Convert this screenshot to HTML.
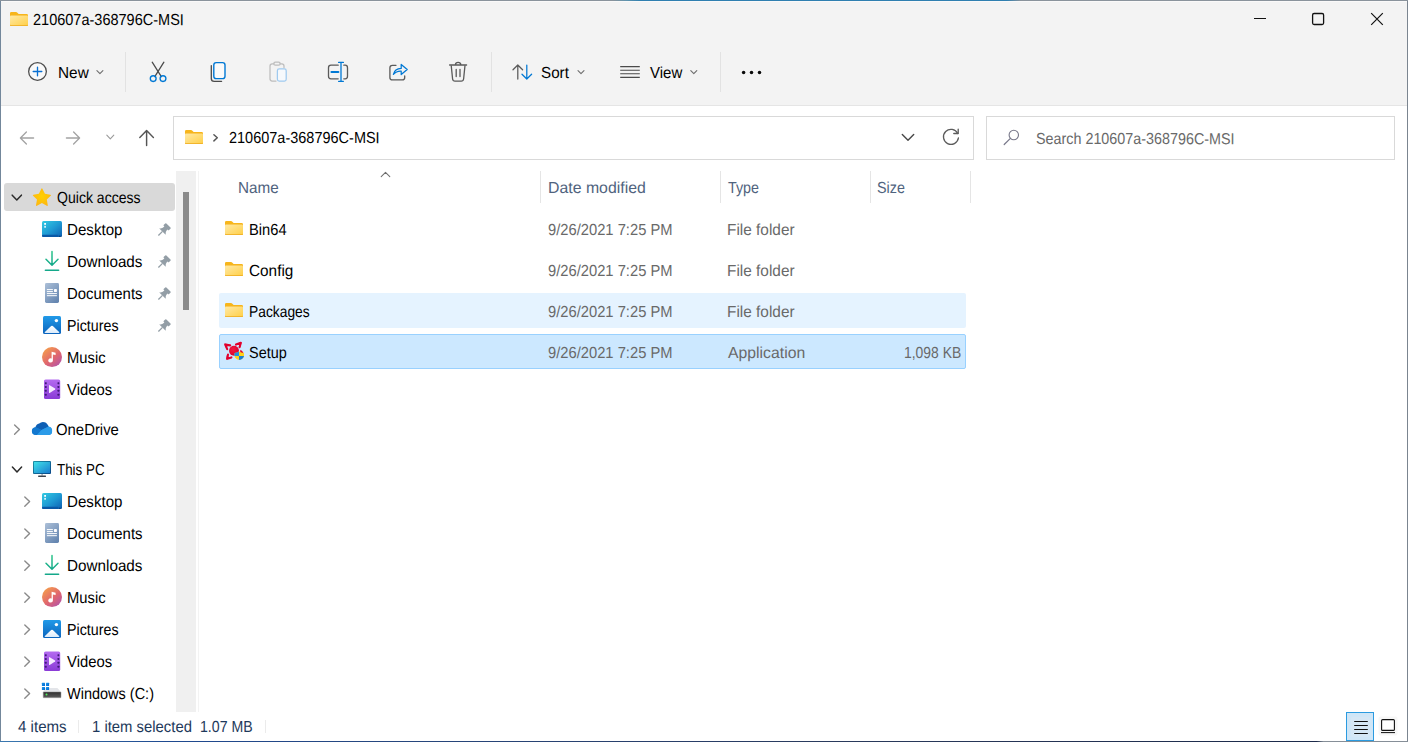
<!DOCTYPE html>
<html lang="en">
<head>
<meta charset="utf-8">
<title>210607a-368796C-MSI</title>
<style>
*{box-sizing:border-box;margin:0;padding:0}
html,body{width:1408px;height:742px;overflow:hidden;background:#fff}
body{position:relative;font-family:"Liberation Sans",sans-serif;font-size:16px;color:#000}
.t{position:absolute;white-space:nowrap;line-height:20px;height:20px;transform-origin:0 50%}
.k{color:#000}.g{color:#696969}.h{color:#50637e}.s{color:#1e395b}
.d{position:absolute}
.frame{position:absolute;left:0;top:0;width:1408px;height:742px;border:1px solid #7b8590;border-left-color:#73879b;border-top-color:#7d8a98;z-index:9}
.ft{left:0;top:0;width:1408px;height:1px;z-index:10;background:linear-gradient(90deg,#8a939c 0,#8a939c 43.5%,#5f93ad 44.5%,#2f7fb0 45.5%,#2f7fb0 71.5%,#8a939c 72.5%,#8a939c 100%)}
.hl{left:1px;top:1px;width:1406px;height:1px;background:#faf9f9}
.fb{left:0;top:741px;width:1408px;height:1px;z-index:10;background:linear-gradient(90deg,#3a78b0 0,#1f4a90 12%,#27467c 30%,#2a3a5c 60%,#1c2a4a 93.5%,#868f98 94%,#868f98 100%)}
.chrome{left:1px;top:1px;width:1406px;height:104px;background:#f3f3f3}
.cline{left:1px;top:105px;width:1406px;height:1px;background:#e5e5e5}
.vsep{width:1px;background:#e2e2e2;top:52px;height:40px}
.box{top:116px;height:44px;border:1px solid #d9d9d9;background:#fff}
.track{left:176px;top:171px;width:20px;height:541px;background:#f0f0f0}
.thumb{left:183px;top:192px;width:6px;height:118px;background:#8b8b8b}
.split{left:198px;top:171px;width:1px;height:541px;background:#f3f3f3}
.qa{left:4px;top:183px;width:171px;height:28px;background:#d9d9d9;border-radius:3px}
.hsep{top:171px;width:1px;height:32px;background:#e5e5e5}
.rowhov{left:219px;top:293px;width:747px;height:35px;background:#e5f3ff;border-radius:2px}
.rowsel{left:219px;top:334px;width:747px;height:35px;background:#cce8ff;border:1px solid #99d1ff;border-radius:2px}
.ssep{top:720px;width:1px;height:13px;background:#ebebeb}
svg.ic{position:absolute;overflow:visible}
</style>
</head>
<body>
<div class="d chrome"></div>
<div class="d cline"></div>
<div class="d vsep" style="left:125px"></div>
<div class="d vsep" style="left:491px"></div>
<div class="d vsep" style="left:720px"></div>
<div class="d box" style="left:173px;width:801px"></div>
<div class="d box" style="left:986px;width:409px"></div>
<div class="d qa"></div>
<div class="d track"></div>
<div class="d thumb"></div>
<div class="d split"></div>
<div class="d hsep" style="left:540px"></div>
<div class="d hsep" style="left:720px"></div>
<div class="d hsep" style="left:870px"></div>
<div class="d hsep" style="left:970px"></div>
<div class="d rowhov"></div>
<div class="d rowsel"></div>
<div class="d ssep" style="left:78px"></div>
<div class="d ssep" style="left:265px"></div>
<div class="d fb"></div>
<div class="d ft"></div>
<div class="d hl"></div>
<svg class="ic" width="1408" height="742" viewBox="0 0 1408 742" style="left:0;top:0"><defs><linearGradient id="fg" x1="0" y1="0" x2="1" y2="1"><stop offset="0" stop-color="#ffe9a6"/><stop offset="1" stop-color="#ffd04a"/></linearGradient><radialGradient id="sg" cx=".5" cy=".45" r=".6"><stop offset="0" stop-color="#ffd000"/><stop offset="1" stop-color="#fdb515"/></radialGradient><linearGradient id="dg" x1="0" y1="0" x2="1" y2="1"><stop offset="0" stop-color="#33cbe2"/><stop offset=".5" stop-color="#1f9bd4"/><stop offset="1" stop-color="#0d5fb2"/></linearGradient><linearGradient id="gg" x1="0" y1="0" x2="0" y2="1"><stop offset="0" stop-color="#2bc48a"/><stop offset="1" stop-color="#14a88a"/></linearGradient><linearGradient id="cg" x1="0" y1="0" x2=".7" y2="1"><stop offset="0" stop-color="#adc0d8"/><stop offset="1" stop-color="#6687b1"/></linearGradient><linearGradient id="pg" x1="0" y1="0" x2="0" y2="1"><stop offset="0" stop-color="#219ae8"/><stop offset="1" stop-color="#0c64bd"/></linearGradient><linearGradient id="mg" x1="0.15" y1="0.1" x2=".85" y2=".95"><stop offset="0" stop-color="#f39a4e"/><stop offset=".55" stop-color="#e0666e"/><stop offset="1" stop-color="#b455a8"/></linearGradient><linearGradient id="vg" x1="0" y1="0" x2="0" y2="1"><stop offset="0" stop-color="#b46bf0"/><stop offset="1" stop-color="#8a3bd6"/></linearGradient><linearGradient id="tg" x1="0" y1="0" x2="1" y2="1"><stop offset="0" stop-color="#40e0e8"/><stop offset="1" stop-color="#1a7ed0"/></linearGradient><linearGradient id="wg" x1="0" y1="0" x2="0" y2="1"><stop offset="0" stop-color="#fff"/><stop offset="1" stop-color="#dcecfb"/></linearGradient><linearGradient id="tf" x1="0" y1="0" x2="1" y2="1"><stop offset="0" stop-color="#1c93a8"/><stop offset="1" stop-color="#0a4688"/></linearGradient><linearGradient id="hg" x1="0" y1="0" x2="0" y2="1"><stop offset="0" stop-color="#2e2e2e"/><stop offset="1" stop-color="#5c5c5c"/></linearGradient><linearGradient id="lg" x1="0" y1="0" x2="1" y2="1"><stop offset="0" stop-color="#1a96ea"/><stop offset="1" stop-color="#0068d2"/></linearGradient><radialGradient id="rg" cx=".4" cy=".35" r=".7"><stop offset="0" stop-color="#f2183f"/><stop offset="1" stop-color="#d9002c"/></radialGradient></defs>
<g transform="translate(10,12)"><path d="M0 1.3Q0 0 1.3 0H6.1Q6.7 0 7.1 .4L8.6 1.9H16.7Q18 1.9 18 3.2V12.7Q18 14 16.7 14H1.3Q0 14 0 12.7Z" fill="#f7b51b"/><path d="M0 4.4Q0 3.5 .9 3.5H17.1Q18 3.5 18 4.4V12.8Q18 14 16.8 14H1.2Q0 14 0 12.8Z" fill="#eeaa1c"/><path d="M0 4.4Q0 3.5 .9 3.5H17.1Q18 3.5 18 4.4V12.3Q18 13.3 17 13.3H1Q0 13.3 0 12.3Z" fill="url(#fg)"/></g>
<rect x="1254" y="18" width="12" height="1" fill="#111"/>
<rect x="1312.6" y="13.5" width="11" height="11" rx="1.5" fill="none" stroke="#111" stroke-width="1.3"/>
<path d="M1371.2 13.2L1382.8 24.8M1382.8 13.2L1371.2 24.8" stroke="#111" stroke-width="1.2" fill="none"/>
<circle cx="37.5" cy="71.45" r="8.85" fill="#f9f9f9" stroke="#4d4d4d" stroke-width="1.3"/>
<path d="M33.2 71.5H41.8M37.5 67.2V75.8" stroke="#0a70d2" stroke-width="1.35" stroke-linecap="round"/>
<path d="M96.9 70.55L99.9 73.64999999999999L102.9 70.55" fill="none" stroke="#6e6e6e" stroke-width="1.1" stroke-linecap="round" stroke-linejoin="round"/>
<path d="M152.2 62.2L161.3 76.6M163.9 62.2L154.8 76.6" stroke="#4a4a4a" stroke-width="1.25" stroke-linecap="round"/>
<circle cx="153.2" cy="78.6" r="2.9" fill="none" stroke="#0078d4" stroke-width="1.35"/><circle cx="163" cy="78.6" r="2.9" fill="none" stroke="#0078d4" stroke-width="1.35"/>
<path d="M211.3 65.6V78.4Q211.3 81.3 214.2 81.3H221.6" fill="none" stroke="#4a4a4a" stroke-width="1.3" stroke-linecap="round"/>
<rect x="213.8" y="62.6" width="11.2" height="16" rx="2.4" fill="#fafafa" stroke="#0078d4" stroke-width="1.4"/>
<path d="M276 81H272.2Q270 81 270 78.8V66Q270 63.8 272.2 63.8H274M280 63.8H281.8Q284 63.8 284 66V67.6" fill="none" stroke="#bdbdbd" stroke-width="1.25" stroke-linecap="round"/>
<rect x="273.8" y="62.2" width="6.4" height="3" rx="1.5" fill="none" stroke="#bdbdbd" stroke-width="1.2"/>
<rect x="277.4" y="68.9" width="8.8" height="12.2" rx="1.8" fill="#f6f9fc" stroke="#9fcaef" stroke-width="1.25"/>
<path d="M338.2 65.2H331Q328.5 65.2 328.5 67.7V76.3Q328.5 78.8 331 78.8H338.2M343.8 65.2H345.2Q347.5 65.2 347.5 67.7V76.3Q347.5 78.8 345.2 78.8H343.8" fill="none" stroke="#5a5a5a" stroke-width="1.3" stroke-linecap="round"/>
<path d="M331.4 72H338.4" stroke="#0078d4" stroke-width="1.9" stroke-linecap="round"/>
<path d="M341 62.4V81.3M338.6 62.4H343.4M338.6 81.3H343.4" stroke="#0078d4" stroke-width="1.3" stroke-linecap="round"/>
<path d="M396 65.3H392.4Q389.9 65.3 389.9 67.8V77.4Q389.9 79.9 392.4 79.9H402.2Q404.7 79.9 404.7 77.4V76" fill="none" stroke="#5a5a5a" stroke-width="1.3" stroke-linecap="round"/>
<path d="M393.4 74.4Q394.6 68.6 401.2 68.4V64.4L407.2 69.5L401.2 74.6V71.1Q396.4 70.8 393.4 74.4Z" fill="#f3f3f3" stroke="#0078d4" stroke-width="1.25" stroke-linejoin="round"/>
<path d="M449.6 65H466.6M455.4 64.6Q455.6 62.4 458.1 62.4Q460.6 62.4 460.8 64.6" fill="none" stroke="#5a5a5a" stroke-width="1.3" stroke-linecap="round"/>
<path d="M451.2 65.4L452.6 79Q452.9 81.2 455 81.2H461.2Q463.3 81.2 463.6 79L465 65.4" fill="none" stroke="#5a5a5a" stroke-width="1.3" stroke-linejoin="round"/>
<path d="M456.2 69.4V76.6M460 69.4V76.6" stroke="#5a5a5a" stroke-width="1.3" stroke-linecap="round"/>
<path d="M517.8 65.2V79M513 69.8L517.8 65L522.6 69.8" fill="none" stroke="#5a5a5a" stroke-width="1.25" stroke-linecap="round" stroke-linejoin="round"/>
<path d="M526.8 65V78.8M522 74.2L526.8 79L531.6 74.2" fill="none" stroke="#0078d4" stroke-width="1.25" stroke-linecap="round" stroke-linejoin="round"/>
<path d="M578.0 70.55L581.0 73.64999999999999L584.0 70.55" fill="none" stroke="#6e6e6e" stroke-width="1.1" stroke-linecap="round" stroke-linejoin="round"/>
<path d="M620.2 66.6H639.8M620.2 70.2H639.8M620.2 73.8H639.8M620.2 77.4H639.8" stroke="#4a4a4a" stroke-width="1.1"/>
<path d="M690.8 70.55L693.8 73.64999999999999L696.8 70.55" fill="none" stroke="#6e6e6e" stroke-width="1.1" stroke-linecap="round" stroke-linejoin="round"/>
<circle cx="743.6" cy="72.5" r="1.75" fill="#0a0a0a"/>
<circle cx="751.5" cy="72.5" r="1.75" fill="#0a0a0a"/>
<circle cx="759.5" cy="72.5" r="1.75" fill="#0a0a0a"/>
<path d="M33.6 138H20.6M26.4 132L20.4 138L26.4 144" fill="none" stroke="#a3a3a3" stroke-width="1.3" stroke-linecap="round" stroke-linejoin="round"/>
<path d="M66.4 138H79.4M73.6 132L79.6 138L73.6 144" fill="none" stroke="#a3a3a3" stroke-width="1.3" stroke-linecap="round" stroke-linejoin="round"/>
<path d="M106.8 135.2L110.3 138.8L113.8 135.2" fill="none" stroke="#9a9a9a" stroke-width="1.1" stroke-linecap="round" stroke-linejoin="round"/>
<path d="M146.6 145.4V130.8M139.8 137.4L146.6 130.6L153.4 137.4" fill="none" stroke="#555" stroke-width="1.45" stroke-linecap="round" stroke-linejoin="round"/>
<g transform="translate(185,130)"><path d="M0 1.3Q0 0 1.3 0H6.1Q6.7 0 7.1 .4L8.6 1.9H16.7Q18 1.9 18 3.2V12.7Q18 14 16.7 14H1.3Q0 14 0 12.7Z" fill="#f7b51b"/><path d="M0 4.4Q0 3.5 .9 3.5H17.1Q18 3.5 18 4.4V12.8Q18 14 16.8 14H1.2Q0 14 0 12.8Z" fill="#eeaa1c"/><path d="M0 4.4Q0 3.5 .9 3.5H17.1Q18 3.5 18 4.4V12.3Q18 13.3 17 13.3H1Q0 13.3 0 12.3Z" fill="url(#fg)"/></g>
<path d="M213.9 134.7L217.3 137.8L213.9 140.9" fill="none" stroke="#555" stroke-width="1.45" stroke-linecap="round" stroke-linejoin="round"/>
<path d="M902.3 134.4L908.0 140.20000000000002L913.6999999999999 134.4" fill="none" stroke="#484848" stroke-width="1.4" stroke-linecap="round" stroke-linejoin="round"/>
<path d="M958.4 138A7.5 7.5 0 1 1 957.7 133.5" fill="none" stroke="#5c5c5c" stroke-width="1.35" stroke-linecap="round"/>
<path d="M958.2 129.2V133.5H953.8" fill="none" stroke="#5c5c5c" stroke-width="1.35" stroke-linecap="round" stroke-linejoin="round"/>
<circle cx="1013.8" cy="135" r="4.7" fill="none" stroke="#78788a" stroke-width="1.1"/><path d="M1010.4 138.4L1004.2 144.5" stroke="#78788a" stroke-width="1.2" stroke-linecap="round"/>
<path d="M12.2 195.15L16.799999999999997 200.04999999999998L21.4 195.15" fill="none" stroke="#2b2b2b" stroke-width="1.5" stroke-linecap="round" stroke-linejoin="round"/>
<g transform="translate(31.76,187.96) scale(1.045)"><path d="M9.1 .9Q9.7 -.2 10.3 .9L12.6 5.6L17.8 6.4Q19 6.6 18.1 7.5L14.4 11.1L15.3 16.3Q15.5 17.5 14.4 17L9.7 14.5L5 17Q3.9 17.5 4.1 16.3L5 11.1L1.3 7.5Q.4 6.6 1.6 6.4L6.8 5.6Z" fill="url(#sg)"/></g>
<g transform="translate(42,221)"><path d="M0 1.5Q0 0 1.5 0H18.5Q20 0 20 1.5V14.6Q20 16 18.5 16H1.5Q0 16 0 14.6Z" fill="url(#dg)"/><rect x="0" y="13.8" width="16.4" height="2.2" rx="1" fill="#0a58a6"/><rect x="2.2" y="2" width="1.8" height="1.8" fill="#fff"/><rect x="2.2" y="4.9" width="1.8" height="1.8" fill="#d7f3fb"/><rect x="16.9" y="14.6" width="1" height="1.4" fill="#0a3f7a"/><rect x="18.4" y="14.6" width="1" height="1.4" fill="#0a3f7a"/></g>
<g transform="translate(162.35,231.55)"><g transform="rotate(45)" fill="#939ea6"><path d="M-4.7 0Q-2.3 -1.3 -2.1 -4.6L-2.1 -5L-3 -5Q-3.7 -5 -3.7 -5.8L-3.7 -7.8Q-3.7 -8.6 -2.9 -8.6L2.9 -8.6Q3.7 -8.6 3.7 -7.8L3.7 -5.8Q3.7 -5 3 -5L2.1 -5L2.1 -4.6Q2.3 -1.3 4.7 0Z"/><rect x="-.65" y="-.2" width="1.3" height="5.8"/></g></g>
<g transform="translate(45,251.6)"><path d="M7 0V13.2M1 7.6L7 13.6L13 7.6" fill="none" stroke="url(#gg)" stroke-width="1.5" stroke-linecap="round" stroke-linejoin="round"/><path d="M0.4 18.7H13.6" stroke="#14a88a" stroke-width="1.6" stroke-linecap="round"/></g>
<g transform="translate(162.35,263.55)"><g transform="rotate(45)" fill="#939ea6"><path d="M-4.7 0Q-2.3 -1.3 -2.1 -4.6L-2.1 -5L-3 -5Q-3.7 -5 -3.7 -5.8L-3.7 -7.8Q-3.7 -8.6 -2.9 -8.6L2.9 -8.6Q3.7 -8.6 3.7 -7.8L3.7 -5.8Q3.7 -5 3 -5L2.1 -5L2.1 -4.6Q2.3 -1.3 4.7 0Z"/><rect x="-.65" y="-.2" width="1.3" height="5.8"/></g></g>
<g transform="translate(45,283.1)"><path d="M0 1.4Q0 0 1.4 0H12.6Q14 0 14 1.4V18.4Q14 19.8 12.6 19.8H1.4Q0 19.8 0 18.4Z" fill="url(#cg)"/><path d="M1.9 6.5H7.9M1.9 8.5H7.9M1.9 10.5H11.9M1.9 12.6H11.9" stroke="#fff" stroke-width="1"/><rect x="9" y="6" width="2.9" height="2.8" rx=".4" fill="#fff"/></g>
<g transform="translate(162.35,295.55)"><g transform="rotate(45)" fill="#939ea6"><path d="M-4.7 0Q-2.3 -1.3 -2.1 -4.6L-2.1 -5L-3 -5Q-3.7 -5 -3.7 -5.8L-3.7 -7.8Q-3.7 -8.6 -2.9 -8.6L2.9 -8.6Q3.7 -8.6 3.7 -7.8L3.7 -5.8Q3.7 -5 3 -5L2.1 -5L2.1 -4.6Q2.3 -1.3 4.7 0Z"/><rect x="-.65" y="-.2" width="1.3" height="5.8"/></g></g>
<g transform="translate(43,316.1)"><path d="M0 1.5Q0 0 1.5 0H16.5Q18 0 18 1.5V16.3Q18 17.8 16.5 17.8H1.5Q0 17.8 0 16.3Z" fill="url(#pg)"/><path d="M1.6 16.2L8.2 10Q9 9.3 9.8 10L16.4 16.2Q16.4 16.8 15.7 16.8H2.3Q1.6 16.8 1.6 16.2Z" fill="url(#wg)"/><circle cx="13.4" cy="4.5" r="1.7" fill="#fff"/></g>
<g transform="translate(162.35,327.55)"><g transform="rotate(45)" fill="#939ea6"><path d="M-4.7 0Q-2.3 -1.3 -2.1 -4.6L-2.1 -5L-3 -5Q-3.7 -5 -3.7 -5.8L-3.7 -7.8Q-3.7 -8.6 -2.9 -8.6L2.9 -8.6Q3.7 -8.6 3.7 -7.8L3.7 -5.8Q3.7 -5 3 -5L2.1 -5L2.1 -4.6Q2.3 -1.3 4.7 0Z"/><rect x="-.65" y="-.2" width="1.3" height="5.8"/></g></g>
<g transform="translate(42,347.1)"><circle cx="10" cy="10" r="10" fill="url(#mg)"/><path d="M9.6 4.6L13.6 5.6V8L10.9 7.4V13.4A2.3 2.1 0 1 1 9.6 11.5Z" fill="#fff"/></g>
<g transform="translate(44,379.4)"><path d="M0 1.6Q0 0 1.6 0H14.6Q16.2 0 16.2 1.6V18.1Q16.2 19.7 14.6 19.7H1.6Q0 19.7 0 18.1Z" fill="url(#vg)"/><path d="M5.7 5.8L11.1 9.2Q11.7 9.65 11.1 10.1L5.7 13.5Q5 13.8 5 13V6.3Q5 5.5 5.7 5.8Z" fill="#f6ecff"/><rect x="0.9" y="2.85" width="1.8" height="1.9" rx=".4" fill="#3f1a78"/><rect x="0.9" y="6.65" width="1.8" height="1.9" rx=".4" fill="#3f1a78"/><rect x="0.9" y="10.35" width="1.8" height="1.9" rx=".4" fill="#3f1a78"/><rect x="0.9" y="14.35" width="1.8" height="1.9" rx=".4" fill="#3f1a78"/><rect x="13.5" y="2.85" width="1.8" height="1.9" rx=".4" fill="#3f1a78"/><rect x="13.5" y="6.65" width="1.8" height="1.9" rx=".4" fill="#3f1a78"/><rect x="13.5" y="10.35" width="1.8" height="1.9" rx=".4" fill="#3f1a78"/><rect x="13.5" y="14.35" width="1.8" height="1.9" rx=".4" fill="#3f1a78"/></g>
<path d="M14.6 425.0L19.4 429.6L14.6 434.20000000000005" fill="none" stroke="#8a8a8a" stroke-width="1.4" stroke-linecap="round" stroke-linejoin="round"/>
<g transform="translate(31.9,421.8)"><path d="M7.6 3.6A5.6 5.6 0 0 1 17 5.2A4.3 4.3 0 0 1 20.2 9.4Q20.2 13.2 16.4 13.2H4.3Q0 13.2 0 9.3Q0 5.9 3.4 5.5Q5 3 7.6 3.6Z" fill="#1a86da"/><path d="M7.3 1.6A5.8 5.8 0 0 1 16.6 4.6L9.6 8.2L3.6 5.4A4.8 4.8 0 0 1 7.3 1.6Z" fill="#0e5fb4"/><path d="M3.6 5.4L9.6 8.2L5 13.2H4.3Q0 13.2 0 9.3Q0 6 3.6 5.4Z" fill="#1378cf"/><path d="M16.6 4.6A4.3 4.3 0 0 1 20.2 9.4Q20.2 13.2 16.4 13.2H5L9.6 8.2Z" fill="#2b9be8"/></g>
<path d="M12.4 467.05L17.0 471.95L21.6 467.05" fill="none" stroke="#2b2b2b" stroke-width="1.5" stroke-linecap="round" stroke-linejoin="round"/>
<g transform="translate(33,460.9)"><rect x="0" y="0" width="18" height="13.1" rx=".9" fill="url(#tf)"/><rect x="1" y="1" width="16" height="11.1" rx=".3" fill="url(#tg)"/><rect x="8.3" y="13.1" width="1.6" height="1.6" fill="#a9b0b8"/><rect x="5.1" y="14.7" width="7.9" height="1.4" rx=".4" fill="#3c424c"/></g>
<path d="M24.8 497.0L29.6 501.6L24.8 506.20000000000005" fill="none" stroke="#8a8a8a" stroke-width="1.4" stroke-linecap="round" stroke-linejoin="round"/>
<g transform="translate(42,493)"><path d="M0 1.5Q0 0 1.5 0H18.5Q20 0 20 1.5V14.6Q20 16 18.5 16H1.5Q0 16 0 14.6Z" fill="url(#dg)"/><rect x="0" y="13.8" width="16.4" height="2.2" rx="1" fill="#0a58a6"/><rect x="2.2" y="2" width="1.8" height="1.8" fill="#fff"/><rect x="2.2" y="4.9" width="1.8" height="1.8" fill="#d7f3fb"/><rect x="16.9" y="14.6" width="1" height="1.4" fill="#0a3f7a"/><rect x="18.4" y="14.6" width="1" height="1.4" fill="#0a3f7a"/></g>
<path d="M24.8 529.0L29.6 533.6L24.8 538.2" fill="none" stroke="#8a8a8a" stroke-width="1.4" stroke-linecap="round" stroke-linejoin="round"/>
<g transform="translate(45,523.1)"><path d="M0 1.4Q0 0 1.4 0H12.6Q14 0 14 1.4V18.4Q14 19.8 12.6 19.8H1.4Q0 19.8 0 18.4Z" fill="url(#cg)"/><path d="M1.9 6.5H7.9M1.9 8.5H7.9M1.9 10.5H11.9M1.9 12.6H11.9" stroke="#fff" stroke-width="1"/><rect x="9" y="6" width="2.9" height="2.8" rx=".4" fill="#fff"/></g>
<path d="M24.8 561.0L29.6 565.6L24.8 570.2" fill="none" stroke="#8a8a8a" stroke-width="1.4" stroke-linecap="round" stroke-linejoin="round"/>
<g transform="translate(45,555.6)"><path d="M7 0V13.2M1 7.6L7 13.6L13 7.6" fill="none" stroke="url(#gg)" stroke-width="1.5" stroke-linecap="round" stroke-linejoin="round"/><path d="M0.4 18.7H13.6" stroke="#14a88a" stroke-width="1.6" stroke-linecap="round"/></g>
<path d="M24.8 593.0L29.6 597.6L24.8 602.2" fill="none" stroke="#8a8a8a" stroke-width="1.4" stroke-linecap="round" stroke-linejoin="round"/>
<g transform="translate(42,587.1)"><circle cx="10" cy="10" r="10" fill="url(#mg)"/><path d="M9.6 4.6L13.6 5.6V8L10.9 7.4V13.4A2.3 2.1 0 1 1 9.6 11.5Z" fill="#fff"/></g>
<path d="M24.8 625.0L29.6 629.6L24.8 634.2" fill="none" stroke="#8a8a8a" stroke-width="1.4" stroke-linecap="round" stroke-linejoin="round"/>
<g transform="translate(43,620.1)"><path d="M0 1.5Q0 0 1.5 0H16.5Q18 0 18 1.5V16.3Q18 17.8 16.5 17.8H1.5Q0 17.8 0 16.3Z" fill="url(#pg)"/><path d="M1.6 16.2L8.2 10Q9 9.3 9.8 10L16.4 16.2Q16.4 16.8 15.7 16.8H2.3Q1.6 16.8 1.6 16.2Z" fill="url(#wg)"/><circle cx="13.4" cy="4.5" r="1.7" fill="#fff"/></g>
<path d="M24.8 657.0L29.6 661.6L24.8 666.2" fill="none" stroke="#8a8a8a" stroke-width="1.4" stroke-linecap="round" stroke-linejoin="round"/>
<g transform="translate(44,651.4)"><path d="M0 1.6Q0 0 1.6 0H14.6Q16.2 0 16.2 1.6V18.1Q16.2 19.7 14.6 19.7H1.6Q0 19.7 0 18.1Z" fill="url(#vg)"/><path d="M5.7 5.8L11.1 9.2Q11.7 9.65 11.1 10.1L5.7 13.5Q5 13.8 5 13V6.3Q5 5.5 5.7 5.8Z" fill="#f6ecff"/><rect x="0.9" y="2.85" width="1.8" height="1.9" rx=".4" fill="#3f1a78"/><rect x="0.9" y="6.65" width="1.8" height="1.9" rx=".4" fill="#3f1a78"/><rect x="0.9" y="10.35" width="1.8" height="1.9" rx=".4" fill="#3f1a78"/><rect x="0.9" y="14.35" width="1.8" height="1.9" rx=".4" fill="#3f1a78"/><rect x="13.5" y="2.85" width="1.8" height="1.9" rx=".4" fill="#3f1a78"/><rect x="13.5" y="6.65" width="1.8" height="1.9" rx=".4" fill="#3f1a78"/><rect x="13.5" y="10.35" width="1.8" height="1.9" rx=".4" fill="#3f1a78"/><rect x="13.5" y="14.35" width="1.8" height="1.9" rx=".4" fill="#3f1a78"/></g>
<path d="M24.8 689.0L29.6 693.6L24.8 698.2" fill="none" stroke="#8a8a8a" stroke-width="1.4" stroke-linecap="round" stroke-linejoin="round"/>
<g transform="translate(41.9,682.85)"><path d="M3.1 5.15H15.5L19.1 9.05H1.3Z" fill="#e3e5e9"/><rect x="1.3" y="9.05" width="17.8" height="5.8" rx=".5" fill="url(#hg)" stroke="#9a9a9a" stroke-width=".5"/><circle cx="4.6" cy="11.7" r="1" fill="#4cf05a"/><rect x="0" y="0" width="3.1" height="3.1" rx=".3" fill="url(#lg)"/><rect x="0" y="4.1" width="3.1" height="3.1" rx=".3" fill="url(#lg)"/><rect x="4.1" y="0" width="3.1" height="3.1" rx=".3" fill="url(#lg)"/><rect x="4.1" y="4.1" width="3.1" height="3.1" rx=".3" fill="url(#lg)"/></g>
<path d="M381.2 176.6L385.5 172.3L389.8 176.6" fill="none" stroke="#6e6e6e" stroke-width="1.05" stroke-linecap="round" stroke-linejoin="round"/>
<g transform="translate(225,221)"><path d="M0 1.3Q0 0 1.3 0H6.1Q6.7 0 7.1 .4L8.6 1.9H16.7Q18 1.9 18 3.2V12.7Q18 14 16.7 14H1.3Q0 14 0 12.7Z" fill="#f7b51b"/><path d="M0 4.4Q0 3.5 .9 3.5H17.1Q18 3.5 18 4.4V12.8Q18 14 16.8 14H1.2Q0 14 0 12.8Z" fill="#eeaa1c"/><path d="M0 4.4Q0 3.5 .9 3.5H17.1Q18 3.5 18 4.4V12.3Q18 13.3 17 13.3H1Q0 13.3 0 12.3Z" fill="url(#fg)"/></g>
<g transform="translate(225,262)"><path d="M0 1.3Q0 0 1.3 0H6.1Q6.7 0 7.1 .4L8.6 1.9H16.7Q18 1.9 18 3.2V12.7Q18 14 16.7 14H1.3Q0 14 0 12.7Z" fill="#f7b51b"/><path d="M0 4.4Q0 3.5 .9 3.5H17.1Q18 3.5 18 4.4V12.8Q18 14 16.8 14H1.2Q0 14 0 12.8Z" fill="#eeaa1c"/><path d="M0 4.4Q0 3.5 .9 3.5H17.1Q18 3.5 18 4.4V12.3Q18 13.3 17 13.3H1Q0 13.3 0 12.3Z" fill="url(#fg)"/></g>
<g transform="translate(225,303)"><path d="M0 1.3Q0 0 1.3 0H6.1Q6.7 0 7.1 .4L8.6 1.9H16.7Q18 1.9 18 3.2V12.7Q18 14 16.7 14H1.3Q0 14 0 12.7Z" fill="#f7b51b"/><path d="M0 4.4Q0 3.5 .9 3.5H17.1Q18 3.5 18 4.4V12.8Q18 14 16.8 14H1.2Q0 14 0 12.8Z" fill="#eeaa1c"/><path d="M0 4.4Q0 3.5 .9 3.5H17.1Q18 3.5 18 4.4V12.3Q18 13.3 17 13.3H1Q0 13.3 0 12.3Z" fill="url(#fg)"/></g>
<g fill="none" stroke="#e2002d" stroke-width="2.1" stroke-linejoin="round" stroke-linecap="round"><path d="M230.2 345.4L225.2 344.6L227.2 349.2"/><path d="M236 344.6L240.8 342.8L239.6 347.2"/><path d="M228 354.6L227.2 358.8L231.4 357.4"/></g>
<path d="M224.3 343.6L229 344.2L226 348Z M241.6 341.9L240.6 346.6L237.4 343.4Z M226.2 359.8L226.8 355.2L230.2 358.6Z" fill="#e2002d"/>
<path d="M240.3 349.8Q243.8 351.6 243.8 355.4L240 354.6Z" fill="#e2002d"/>
<circle cx="234" cy="350.8" r="4.95" fill="url(#rg)"/>
<path d="M239 351.6Q241.2 352.8 244 352.9V355.6Q243.8 358.6 239 360.1Q234.6 358.6 234.5 355.6V352.9Q237 352.8 239 351.6Z" fill="#ffd21a"/>
<path d="M239 351.6Q237 352.8 234.5 352.9V355.9H239Z" fill="#1e90e0"/>
<path d="M239 355.9H244Q243.6 358.7 239 360.1Z" fill="#1a7fd2"/>
<rect x="1346.5" y="712.5" width="27" height="28" fill="#cfe6f7" stroke="#2b9be0" stroke-width="1"/>
<rect x="1351" y="717" width="19" height="20" rx="2" fill="#d9e8f3" opacity=".6"/>
<path d="M1354.2 721.5H1367.8M1354.2 725.5H1367.8M1354.2 729.5H1367.8M1354.2 733.5H1367.8" stroke="#111" stroke-width="1.1"/>
<rect x="1378.5" y="716.5" width="19" height="19" rx="2" fill="#f7f7f7"/>
<rect x="1381.6" y="719.6" width="12.8" height="10.8" rx="1" fill="#fff" stroke="#111" stroke-width="1.1"/><path d="M1381 732.6H1395" stroke="#111" stroke-width="1"/></svg>
<span class="t k" style="left:32.66px;top:10px;transform:matrix(0.9069,.0008,0,1,0,0)">210607a-368796C-MSI</span>
<span class="t" style="left:57.67px;top:63px;transform:matrix(0.9604,.0008,0,1,0,0)">New</span>
<span class="t" style="left:541.25px;top:63px;transform:matrix(0.9495,.0008,0,1,0,0)">Sort</span>
<span class="t" style="left:650.16px;top:63px;transform:matrix(0.9379,.0008,0,1,0,0)">View</span>
<span class="t" style="left:228.96px;top:128px;transform:matrix(0.9057,.0008,0,1,0,0)">210607a-368796C-MSI</span>
<span class="t g" style="left:1036.30px;top:129px;transform:matrix(0.8963,.0008,0,1,0,0)">Search 210607a-368796C-MSI</span>
<span class="t" style="left:56.78px;top:188px;transform:matrix(0.8791,.0008,0,1,0,0)">Quick access</span>
<span class="t" style="left:66.68px;top:220px;transform:matrix(0.9451,.0008,0,1,0,0)">Desktop</span>
<span class="t" style="left:66.67px;top:252px;transform:matrix(0.9535,.0008,0,1,0,0)">Downloads</span>
<span class="t" style="left:66.70px;top:284px;transform:matrix(0.9330,.0008,0,1,0,0)">Documents</span>
<span class="t" style="left:66.75px;top:316px;transform:matrix(0.8919,.0008,0,1,0,0)">Pictures</span>
<span class="t" style="left:66.71px;top:348px;transform:matrix(0.9241,.0008,0,1,0,0)">Music</span>
<span class="t" style="left:67.07px;top:380px;transform:matrix(0.9273,.0008,0,1,0,0)">Videos</span>
<span class="t" style="left:56.25px;top:420px;transform:matrix(0.9306,.0008,0,1,0,0)">OneDrive</span>
<span class="t" style="left:57.20px;top:460px;transform:matrix(0.8358,.0008,0,1,0,0)">This PC</span>
<span class="t" style="left:66.68px;top:492px;transform:matrix(0.9451,.0008,0,1,0,0)">Desktop</span>
<span class="t" style="left:66.70px;top:524px;transform:matrix(0.9330,.0008,0,1,0,0)">Documents</span>
<span class="t" style="left:66.67px;top:556px;transform:matrix(0.9535,.0008,0,1,0,0)">Downloads</span>
<span class="t" style="left:66.71px;top:588px;transform:matrix(0.9241,.0008,0,1,0,0)">Music</span>
<span class="t" style="left:66.75px;top:620px;transform:matrix(0.8919,.0008,0,1,0,0)">Pictures</span>
<span class="t" style="left:67.07px;top:652px;transform:matrix(0.9273,.0008,0,1,0,0)">Videos</span>
<span class="t" style="left:67.12px;top:684px;transform:matrix(0.9057,.0008,0,1,0,0)">Windows (C:)</span>
<span class="t h" style="left:237.77px;top:178px;transform:matrix(0.9554,.0008,0,1,0,0)">Name</span>
<span class="t h" style="left:547.53px;top:178px;transform:matrix(0.9911,.0008,0,1,0,0)">Date modified</span>
<span class="t h" style="left:728.08px;top:178px;transform:matrix(0.8947,.0008,0,1,0,0)">Type</span>
<span class="t h" style="left:877.30px;top:178px;transform:matrix(0.8985,.0008,0,1,0,0)">Size</span>
<span class="t" style="left:248.72px;top:220px;transform:matrix(0.9173,.0008,0,1,0,0)">Bin64</span>
<span class="t g" style="left:548.06px;top:220px;transform:matrix(0.9212,.0008,0,1,0,0)">9/26/2021 7:25 PM</span>
<span class="t g" style="left:727.17px;top:220px;transform:matrix(0.9618,.0008,0,1,0,0)">File folder</span>
<span class="t" style="left:249.10px;top:261px;transform:matrix(0.9587,.0008,0,1,0,0)">Config</span>
<span class="t g" style="left:548.06px;top:261px;transform:matrix(0.9212,.0008,0,1,0,0)">9/26/2021 7:25 PM</span>
<span class="t g" style="left:727.17px;top:261px;transform:matrix(0.9618,.0008,0,1,0,0)">File folder</span>
<span class="t" style="left:248.78px;top:302px;transform:matrix(0.8630,.0008,0,1,0,0)">Packages</span>
<span class="t g" style="left:548.06px;top:302px;transform:matrix(0.9212,.0008,0,1,0,0)">9/26/2021 7:25 PM</span>
<span class="t g" style="left:727.17px;top:302px;transform:matrix(0.9618,.0008,0,1,0,0)">File folder</span>
<span class="t" style="left:248.90px;top:343px;transform:matrix(0.9037,.0008,0,1,0,0)">Setup</span>
<span class="t g" style="left:548.06px;top:343px;transform:matrix(0.9212,.0008,0,1,0,0)">9/26/2021 7:25 PM</span>
<span class="t g" style="left:728.17px;top:343px;transform:matrix(0.9865,.0008,0,1,0,0)">Application</span>
<span class="t g" style="left:903.85px;top:343px;transform:matrix(0.8700,.0008,0,1,0,0)">1,098 KB</span>
<span class="t s" style="left:17.88px;top:717px;transform:matrix(0.9435,.0008,0,1,0,0)">4 items</span>
<span class="t s" style="left:91.59px;top:717px;transform:matrix(0.9286,.0008,0,1,0,0)">1 item selected</span>
<span class="t s" style="left:200.04px;top:717px;transform:matrix(0.8841,.0008,0,1,0,0)">1.07 MB</span>
<div class="frame"></div>
</body>
</html>
